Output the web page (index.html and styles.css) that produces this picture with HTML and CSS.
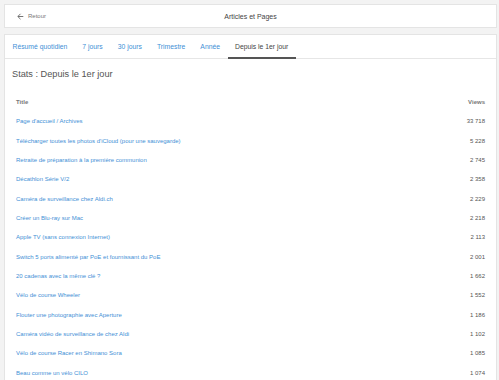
FILE: index.html
```html
<!DOCTYPE html>
<html lang="fr">
<head>
    <meta charset="UTF-8">
    <title>Articles et Pages</title>
    <link rel="stylesheet" href="styles.css">
</head>
<body>

    <!-- BARRE DU HAUT -->
    <div class="card topbar">
        <a class="back" href="#">
            <svg width="7" height="7" viewBox="0 0 10 10"><path d="M9 5H1.5M5 1.2L1.2 5 5 8.8" fill="none" stroke="#666" stroke-width="1.3"/></svg>
            Retour
        </a>
        <div class="page-title">Articles et Pages</div>
    </div>

    <!-- STATS -->
    <div class="card main">
        <nav class="tabs">
            <a class="tab" href="#">Résumé quotidien</a>
            <a class="tab" href="#">7 jours</a>
            <a class="tab" href="#">30 jours</a>
            <a class="tab" href="#">Trimestre</a>
            <a class="tab" href="#">Année</a>
            <a class="tab active" href="#">Depuis le 1er jour</a>
        </nav>

        <h2 class="stats-title">Stats : Depuis le 1er jour</h2>

        <table class="stats">
            <thead>
                <tr><th>Title</th><th class="num">Views</th></tr>
            </thead>
            <tbody>
                <tr><td><a href="#">Page d'accueil / Archives</a></td><td class="num">33 718</td></tr>
                <tr><td><a href="#">Télécharger toutes les photos d'iCloud (pour une sauvegarde)</a></td><td class="num">5 228</td></tr>
                <tr><td><a href="#">Retraite de préparation à la première communion</a></td><td class="num">2 745</td></tr>
                <tr><td><a href="#">Décathlon Série V/2</a></td><td class="num">2 358</td></tr>
                <tr><td><a href="#">Caméra de surveillance chez Aldi.ch</a></td><td class="num">2 229</td></tr>
                <tr><td><a href="#">Créer un Blu-ray sur Mac</a></td><td class="num">2 218</td></tr>
                <tr><td><a href="#">Apple TV (sans connexion Internet)</a></td><td class="num">2 113</td></tr>
                <tr><td><a href="#">Switch 5 ports alimenté par PoE et fournissant du PoE</a></td><td class="num">2 001</td></tr>
                <tr><td><a href="#">20 cadenas avec la même clé ?</a></td><td class="num">1 662</td></tr>
                <tr><td><a href="#">Vélo de course Wheeler</a></td><td class="num">1 552</td></tr>
                <tr><td><a href="#">Flouter une photographie avec Aperture</a></td><td class="num">1 186</td></tr>
                <tr><td><a href="#">Caméra vidéo de surveillance de chez Aldi</a></td><td class="num">1 102</td></tr>
                <tr><td><a href="#">Vélo de course Racer en Shimano Sora</a></td><td class="num">1 085</td></tr>
                <tr><td><a href="#">Beau comme un vélo CILO</a></td><td class="num">1 074</td></tr>
            </tbody>
        </table>
    </div>

</body>
</html>
```

FILE: styles.css
```css
* {
    margin: 0;
    padding: 0;
    box-sizing: border-box;
}

body {
    background: #f3f3f3;
    font-family: 'Liberation Sans', Arial, sans-serif;
    padding: 4px 2px 0 4px;
    color: #555;
    overflow: hidden;
    height: 380px;
}

a {
    text-decoration: none;
}

.card {
    background: #fff;
    border: 1px solid #e4e4e4;
}

.topbar {
    height: 24px;
    display: flex;
    align-items: center;
    position: relative;
    padding-left: 12px;
}

.back {
    display: flex;
    align-items: center;
    gap: 4px;
    font-size: 6px;
    color: #777;
}

.page-title {
    position: absolute;
    left: 0;
    right: 0;
    text-align: center;
    font-size: 7px;
    color: #444;
    pointer-events: none;
}

.main {
    margin-top: 6px;
    height: 360px;
}

.tabs {
    display: flex;
    height: 24px;
    border-bottom: 1px solid #e6e6e6;
}

.tab {
    display: flex;
    align-items: center;
    padding: 0 7.5px;
    font-size: 6.8px;
    color: #3f90d6;
}

.tab.active {
    color: #444;
    border-bottom: 2px solid #555;
    margin-bottom: -1px;
    padding-top: 1px;
}

.stats-title {
    font-size: 9.2px;
    font-weight: 400;
    color: #555;
    padding: 10px 7px 0;
    height: 32px;
}

.stats {
    width: calc(100% - 22px);
    margin-left: 11px;
    border-collapse: collapse;
    font-size: 6px;
}

.stats th {
    font-weight: 700;
    color: #777;
    text-align: left;
    height: 20px;
    padding-top: 1px;
}

.stats td {
    height: 19.35px;
    color: #555;
    padding-top: 1px;
}

.stats td a {
    color: #3f90d6;
}

.stats .num {
    text-align: right;
}
```
